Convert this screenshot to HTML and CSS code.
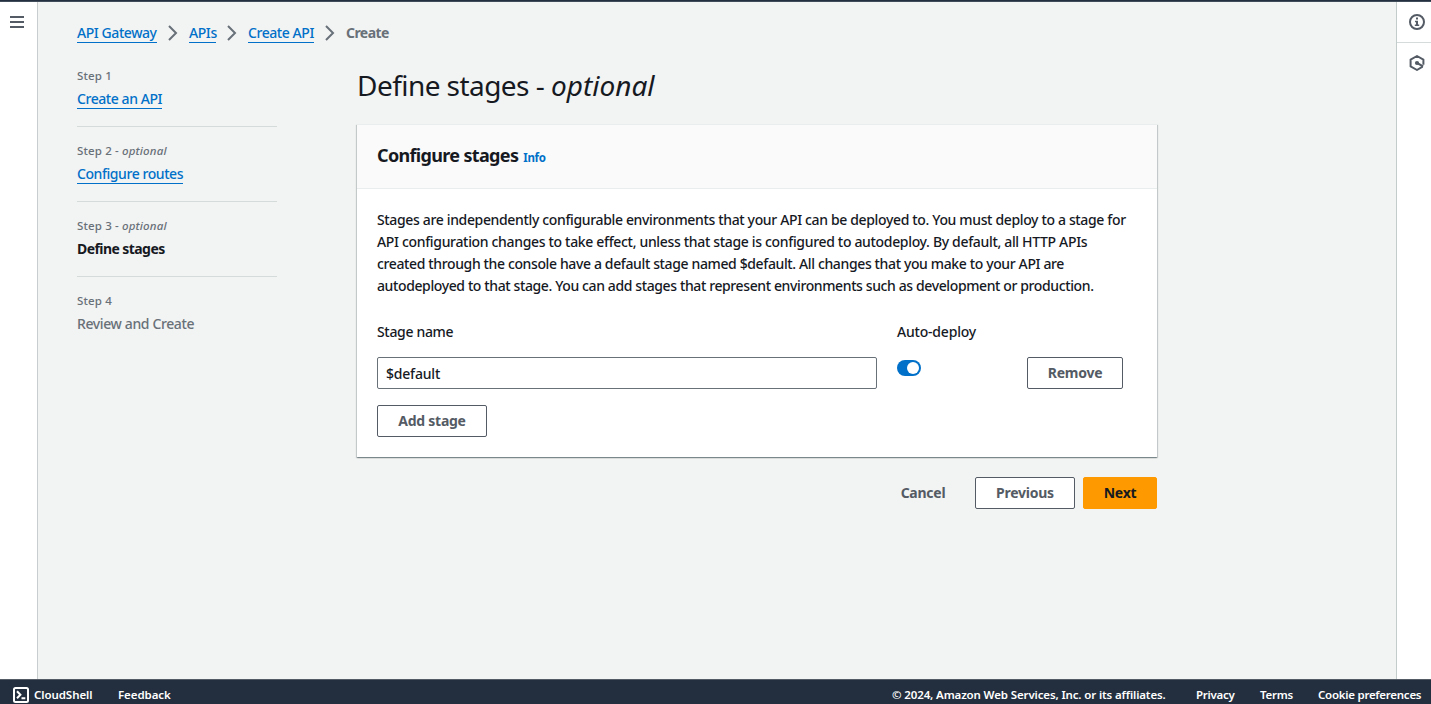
FILE: index.html
```html
<!DOCTYPE html>
<html lang="en">
<head>
<meta charset="utf-8">
<title>API Gateway - Create</title>
<link rel="stylesheet" href="styles.css">
</head>
<body>
<div class="topbar"></div>
<div class="shell">
  <nav class="rail rail-left">
    <svg class="menu-icon" width="14" height="12" viewBox="0 0 14 12"><path d="M0 1h14M0 6h14M0 11h14" stroke="#545b64" stroke-width="2"/></svg>
  </nav>
  <main class="content">
    <ol class="crumbs">
      <li><a class="link w-gateway" href="#">API Gateway</a></li>
      <li class="chev"><svg width="10" height="16" viewBox="0 0 10 16"><path d="M1 1l7 7-7 7" fill="none" stroke="#687078" stroke-width="2"/></svg></li>
      <li><a class="link w-apis" href="#">APIs</a></li>
      <li class="chev"><svg width="10" height="16" viewBox="0 0 10 16"><path d="M1 1l7 7-7 7" fill="none" stroke="#687078" stroke-width="2"/></svg></li>
      <li><a class="link w-create" href="#">Create API</a></li>
      <li class="chev"><svg width="10" height="16" viewBox="0 0 10 16"><path d="M1 1l7 7-7 7" fill="none" stroke="#687078" stroke-width="2"/></svg></li>
      <li class="current">Create</li>
    </ol>
    <div class="columns">
      <aside class="steps">
        <div class="step"><div class="step-label">Step 1</div><a class="link w-anapi" href="#">Create an API</a></div>
        <div class="step"><div class="step-label">Step 2 - <i>optional</i></div><a class="link w-routes" href="#">Configure routes</a></div>
        <div class="step"><div class="step-label">Step 3 - <i>optional</i></div><span class="active">Define stages</span></div>
        <div class="step"><div class="step-label">Step 4</div><span class="pending">Review and Create</span></div>
      </aside>
      <section class="wizard">
        <h1>Define stages - <i>optional</i></h1>
        <div class="card">
          <header class="card-head"><h2>Configure stages</h2><a class="info" href="#">Info</a></header>
          <div class="card-body">
            <p class="copy">
              <span class="l1">Stages are independently configurable environments that your API can be deployed to. You must deploy to a stage for</span>
              <span class="l2">API configuration changes to take effect, unless that stage is configured to autodeploy. By default, all HTTP APIs</span>
              <span class="l3">created through the console have a default stage named $default. All changes that you make to your API are</span>
              <span class="l4">autodeployed to that stage. You can add stages that represent environments such as development or production.</span>
            </p>
            <div class="grid">
              <span class="field-label">Stage name</span><span class="field-label auto-label">Auto-deploy</span><span></span>
              <div class="input">$default</div>
              <div class="toggle"><span class="knob"></span></div>
              <button class="btn remove">Remove</button>
            </div>
            <button class="btn add">Add stage</button>
          </div>
        </div>
        <div class="actions">
          <button class="btn cancel">Cancel</button>
          <button class="btn previous">Previous</button>
          <button class="btn next">Next</button>
        </div>
      </section>
    </div>
  </main>
  <aside class="rail rail-right">
    <div class="tool first"><svg width="16" height="16" viewBox="0 0 16 16"><circle cx="8" cy="8" r="7" fill="none" stroke="#545b64" stroke-width="2"/><path d="M7 3.6h2v2H7zM6 6.8h3v3.6h1.2V12H5.8v-1.6H7V8.3H6z" fill="#545b64"/></svg></div>
    <div class="tool"><svg width="16" height="16" viewBox="0 0 16 16"><path d="M13.6 11.6L8 15l-6.4-3.6V4.6L8 1l6.4 3.6v5.2" fill="none" stroke="#545b64" stroke-width="2" stroke-linejoin="round"/><circle cx="8" cy="8" r="2.1" fill="#545b64"/><path d="M8 8l6.2 3.3" stroke="#545b64" stroke-width="2"/></svg></div>
  </aside>
</div>
<footer class="footer">
  <svg class="shell-icon" width="16" height="16" viewBox="0 0 16 16"><rect x="1" y="1" width="14" height="14" rx="1.5" fill="none" stroke="#fff" stroke-width="2"/><path d="M4 4.3L7.4 7.8 4 11.3M8.5 11.3H12.3" fill="none" stroke="#fff" stroke-width="2"/></svg>
  <span class="f-shell">CloudShell</span>
  <span class="f-feedback">Feedback</span>
  <span class="f-copy">© 2024, Amazon Web Services, Inc. or its affiliates.</span>
  <span class="f-privacy">Privacy</span>
  <span class="f-terms">Terms</span>
  <span class="f-cookie">Cookie preferences</span>
</footer>
</body>
</html>
```
FILE: styles.css
```css
* { box-sizing: border-box; }
body { margin: 0; height: 704px; overflow: hidden; display: flex; flex-direction: column; background: #f2f3f3; color: #16191f; font: 500 14px/22px "Noto Sans", "Open Sans", sans-serif; letter-spacing: -0.33px; white-space: nowrap; }
svg { display: block; flex: none; }
a { text-decoration: none; }
.topbar { height: 2px; flex: none; background: #232f3e; border-bottom: 1px solid #414c5a; }
.shell { flex: 1; display: flex; min-height: 0; }
.rail { background: #fff; flex: none; }
.rail-left { width: 38px; border-right: 1px solid #c8cdcd; padding: 14px 0 0 10px; }
.rail-right { width: 35px; border-left: 1px solid #c3cbcb; }
.tool { height: 40px; padding: 12px 0 0 12px; }
.tool.first { height: 41px; border-bottom: 1px solid #d5dbdb; }
.content { flex: 1; padding: 20px 0 0 39px; min-width: 0; }
.crumbs { list-style: none; margin: 0; padding: 0; display: flex; height: 22px; }
.chev { width: 32px; padding: 3px 0 0 11px; }
.link { display: inline-block; height: 21px; line-height: 22px; color: #0070c8; border-bottom: 1px solid #0070c8; letter-spacing: -0.43px; }
.w-gateway { width: 80px; }
.w-apis { width: 27px; }
.w-create { width: 66px; }
.w-anapi { width: 85px; }
.w-routes { width: 106px; }
.current { color: #687078; font-weight: 700; letter-spacing: -0.55px; }
.columns { display: flex; gap: 80px; }
.steps { width: 200px; padding-top: 21px; }
.step { height: 75px; color: #687078; }
.step + .step { border-top: 1px solid #d5dbdb; padding-top: 13px; }
.step:first-child { height: 61px; }
.step-label { font-size: 11.5px; line-height: 22px; margin-bottom: 1px; letter-spacing: 0.15px; }
.active { color: #16191f; font-weight: 700; letter-spacing: -0.57px; }
.pending { letter-spacing: -0.38px; }
.wizard { width: 800px; padding-top: 21px; }
h1 { margin: 0; font-size: 28px; line-height: 40px; font-weight: 400; letter-spacing: -0.55px; }
h1 i { letter-spacing: 0; }
.card { margin-top: 19px; height: 333px; background: #fff; box-shadow: 0 1px 1px 0 rgba(0,28,36,.3), 1px 1px 1px 0 rgba(0,28,36,.15), -1px 1px 1px 0 rgba(0,28,36,.15); border-top: 1px solid #eaeded; }
.card-head { height: 64px; background: #fafafa; border-bottom: 1px solid #eaeded; padding: 19px 20px 0; display: flex; gap: 5px; }
h2 { margin: 0; font-size: 18px; line-height: 22px; letter-spacing: -0.66px; }
.info { color: #0070c8; font-size: 11.5px; font-weight: 700; line-height: 27px; }
.card-body { padding: 20px; }
.copy { margin: 0; }
.copy span { display: block; }
.l1 { letter-spacing: -0.35px; }
.l3 { letter-spacing: -0.37px; }
.l4 { letter-spacing: -0.385px; }
.auto-label { letter-spacing: -0.2px; }
.grid { display: grid; grid-template-columns: 520px 130px 96px; grid-template-rows: 36px 32px; margin-top: 24px; }
.input { width: 500px; height: 32px; border: 1px solid #687078; border-radius: 2px; padding: 5px 8px; letter-spacing: -0.2px; }
.toggle { width: 24px; height: 16px; margin-top: 3px; border-radius: 8px; background: #0070c8; padding: 2px 2px 2px 10px; }
.knob { display: block; width: 12px; height: 12px; border-radius: 50%; background: #fff; }
.btn { height: 32px; border: 1px solid #545b64; border-radius: 2px; background: #fff; color: #545b64; font: 700 14px/20px "Noto Sans", "Open Sans", sans-serif; letter-spacing: -0.25px; padding: 0; display: block; }
.remove { width: 96px; }
.add { width: 110px; margin-top: 16px; }
.actions { display: flex; justify-content: flex-end; margin-top: 20px; }
.cancel { width: 84px; background: none; border-color: transparent; margin-right: 10px; }
.previous { width: 100px; margin-right: 8px; }
.next { width: 74px; background: #ff9900; border-color: #ff9900; color: #16191f; }
.footer { height: 25px; flex: none; background: #232f3e; border-top: 1px solid #545b64; color: #fff; font-size: 11.5px; font-weight: 600; line-height: 30px; padding: 0 10px 0 13px; display: flex; letter-spacing: -0.13px; }
.shell-icon { margin: 7px 5px 0 0; }
.f-shell { width: 84px; }
.f-feedback { flex: 1; }
.f-shell, .f-feedback { letter-spacing: -0.07px; }
.f-copy { width: 304px; }
.f-privacy { width: 64px; }
.f-terms { width: 58px; }
.f-cookie { width: 103px; }
.f-privacy, .f-terms, .f-cookie { letter-spacing: -0.26px; }
```
